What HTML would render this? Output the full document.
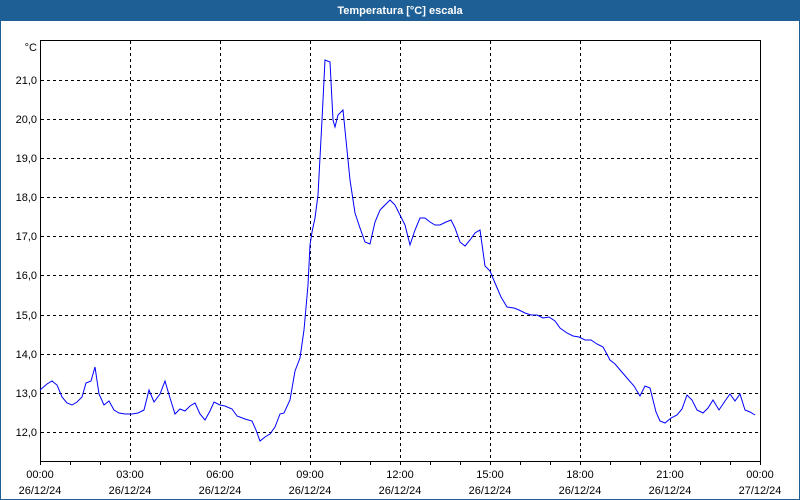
<!DOCTYPE html>
<html><head><meta charset="utf-8"><style>
html,body{margin:0;padding:0;width:800px;height:500px;overflow:hidden;background:#fff;font-family:"Liberation Sans",sans-serif;}
</style></head><body>
<svg width="800" height="500" xmlns="http://www.w3.org/2000/svg" style="display:block">
<rect x="0" y="0" width="800" height="500" fill="#fff"/>
<rect x="0" y="0" width="800" height="21" fill="#1e5f96"/>
<rect x="0" y="0" width="1" height="500" fill="#1e5f96"/>
<rect x="799" y="0" width="1" height="500" fill="#1e5f96"/>
<rect x="0" y="499" width="800" height="1" fill="#1e5f96"/>
<text x="400" y="14" fill="#fff" font-size="11" font-weight="bold" text-anchor="middle" font-family="Liberation Sans, sans-serif">Temperatura [°C] escala</text>
<g stroke="#000" stroke-width="1" stroke-dasharray="3,3" fill="none" shape-rendering="crispEdges">
<path d="M130.5 41V461M220.5 41V461M310.5 41V461M400.5 41V461M490.5 41V461M580.5 41V461M670.5 41V461"/>
<path d="M41 80.5H760M41 119.5H760M41 158.5H760M41 197.5H760M41 236.5H760M41 275.5H760M41 315.5H760M41 354.5H760M41 393.5H760M41 432.5H760"/>
</g>
<g stroke="#000" stroke-width="1" fill="none" shape-rendering="crispEdges">
<path d="M40.5 40.5H760.5V461.5M40.5 40V462M40 461.5H761"/>
<path d="M40.5 461V465M70.5 461V465M100.5 461V465M130.5 461V465M160.5 461V465M190.5 461V465M220.5 461V465M250.5 461V465M280.5 461V465M310.5 461V465M340.5 461V465M370.5 461V465M400.5 461V465M430.5 461V465M460.5 461V465M490.5 461V465M520.5 461V465M550.5 461V465M580.5 461V465M610.5 461V465M640.5 461V465M670.5 461V465M700.5 461V465M730.5 461V465M760.5 461V465"/>
</g>
<g font-size="11" fill="#000" text-anchor="end" font-family="Liberation Sans, sans-serif">
<text x="37" y="51">°C</text>
<text x="37" y="84">21,0</text><text x="37" y="123">20,0</text><text x="37" y="162">19,0</text><text x="37" y="201">18,0</text><text x="37" y="240">17,0</text><text x="37" y="279">16,0</text><text x="37" y="319">15,0</text><text x="37" y="358">14,0</text><text x="37" y="397">13,0</text><text x="37" y="436">12,0</text>
</g>
<g font-size="11" fill="#000" text-anchor="middle" font-family="Liberation Sans, sans-serif">
<text x="40" y="478">00:00</text><text x="40" y="494">26/12/24</text>
<text x="130" y="478">03:00</text><text x="130" y="494">26/12/24</text>
<text x="220" y="478">06:00</text><text x="220" y="494">26/12/24</text>
<text x="310" y="478">09:00</text><text x="310" y="494">26/12/24</text>
<text x="400" y="478">12:00</text><text x="400" y="494">26/12/24</text>
<text x="490" y="478">15:00</text><text x="490" y="494">26/12/24</text>
<text x="580" y="478">18:00</text><text x="580" y="494">26/12/24</text>
<text x="670" y="478">21:00</text><text x="670" y="494">26/12/24</text>
<text x="760" y="478">00:00</text><text x="760" y="494">27/12/24</text>
</g>
<polyline fill="none" stroke="#0000ff" stroke-width="1" points="40,390 47,384 52,381 57,385 62,397 67,403 72,405 77,402 82,397 86,383 91,381 95,367 99,394 104,405 109,401 114,410 119,413 125,414 132,414 138,413 144,410 149,390 154,402 160,394 165,381 170,398 175,414 180,409 185,411 190,406 195,403 200,414 205,420 210,411 214,402 220,405 225,406 232,409 237,416 245,419 252,421 256,430 260,441 265,437 270,434 275,427 280,414 284,413 290,400 295,371 300,358 304,330 308,285 310,245 312,232 315,218 318,195 322,120 325,60 330,62 333,120 335,127 338,115 343,110 346,140 350,180 355,213 360,228 365,242 370,244 375,222 380,210 390,200 395,205 400,215 405,225 410,245 415,230 420,218 425,218 430,222 435,225 440,225 446,222 451,220 455,228 460,242 465,246 470,240 475,233 480,230 485,266 490,271 495,283 501,297 507,307 514,308 519,310 525,313 531,315 537,315 543,318 549,317 555,321 560,328 567,333 573,336 579,337 585,340 591,340 597,344 603,347 610,360 615,364 621,371 627,378 634,386 640,396 645,386 650,388 656,412 660,421 665,423 671,418 677,415 682,409 687,395 692,400 697,410 703,413 708,408 713,400 719,410 725,401 730,394 735,401 740,394 745,410 750,412 755,415"/>
</svg>
</body></html>
